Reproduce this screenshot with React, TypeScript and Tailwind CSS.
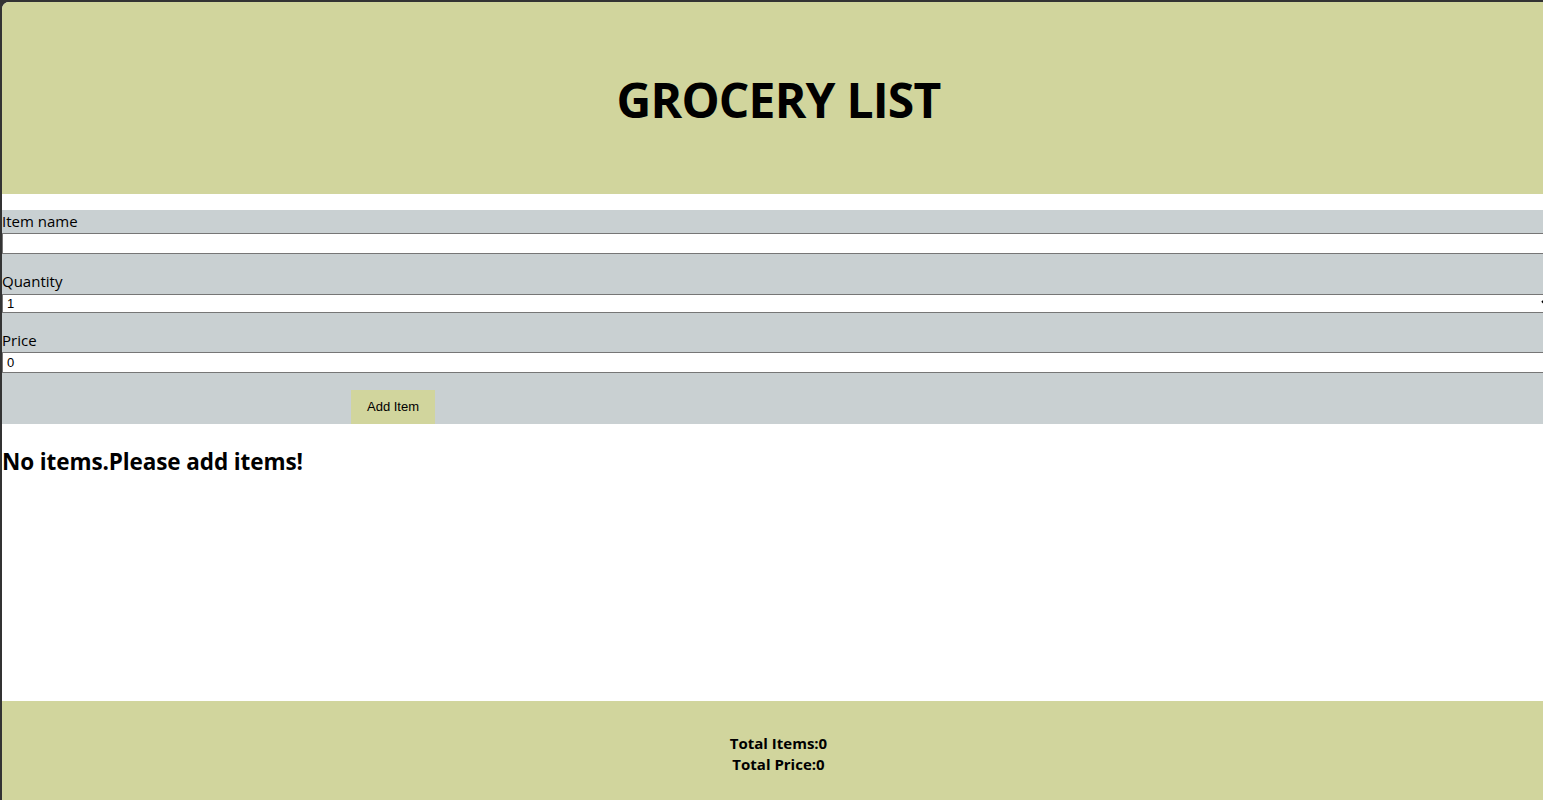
import { FC, useState } from 'react'

const font = { fontFamily: '"Open Sans", "Noto Sans", sans-serif' }

const App: FC = () => {
  const [name, setName] = useState('')
  const [quantity, setQuantity] = useState('1')
  const [price, setPrice] = useState('0')

  return (
    <div className="h-[800px] w-[1543px] overflow-hidden bg-[#333333] pl-[2px] pt-[2px]">
      <div
        className="flex h-[798px] w-[1553px] flex-col overflow-hidden rounded-tl-[7px] bg-white text-black"
        style={font}>
        <header className="flex h-[192px] shrink-0 items-center justify-center bg-[#d1d59d] pt-[4px]">
          <h1 className="text-[48px] leading-none font-bold tracking-[-0.8px]">GROCERY LIST</h1>
        </header>

        <form className="mt-4 flex flex-col bg-[#c9d0d2]" onSubmit={e => e.preventDefault()}>
          <label className="block h-[23px] text-[15px] leading-[23px]">Item name</label>
          <input
            className="block h-[21px] w-full border border-[#767676] bg-white px-1 text-[13px] outline-none"
            value={name}
            onChange={e => setName(e.target.value)}
          />
          <label className="mt-[18px] block h-[22px] text-[15px] leading-[19px]">Quantity</label>
          <select
            className="block h-[19px] w-full border border-[#767676] bg-white pl-0 text-[13px] leading-[17px] outline-none"
            style={{ fontFamily: '"Liberation Sans", Arial, sans-serif' }}
            value={quantity}
            onChange={e => setQuantity(e.target.value)}>
            {Array.from({ length: 20 }, (_, i) => (
              <option key={i + 1} value={String(i + 1)}>
                {i + 1}
              </option>
            ))}
          </select>
          <label className="mt-[18px] block h-[21px] text-[15px] leading-[19px]">Price</label>
          <input
            type="text"
            className="block h-[21px] w-full border border-[#767676] bg-white px-1 text-[13px] outline-none"
            style={{ fontFamily: '"Liberation Sans", Arial, sans-serif' }}
            value={price}
            onChange={e => setPrice(e.target.value)}
          />
          <div className="pt-[17px]">
            <button
              type="submit"
              className="ml-[349px] h-[34px] w-[84px] bg-[#d1d59d] text-[13px]"
              style={{ fontFamily: '"Liberation Sans", Arial, sans-serif' }}>
              Add Item
            </button>
          </div>
        </form>

        <main className="flex-1">
          <h2 className="mt-[23px] text-[22.5px] leading-[30px] font-bold tracking-[-0.1px]">No items.Please add items!</h2>
        </main>

        <footer className="flex h-[99px] shrink-0 flex-col items-center justify-center bg-[#d1d59d] pt-[7px] text-[15px] leading-[21px] font-bold">
          <p>Total Items:0</p>
          <p>Total Price:0</p>
        </footer>
      </div>
    </div>
  )
}

export default App
